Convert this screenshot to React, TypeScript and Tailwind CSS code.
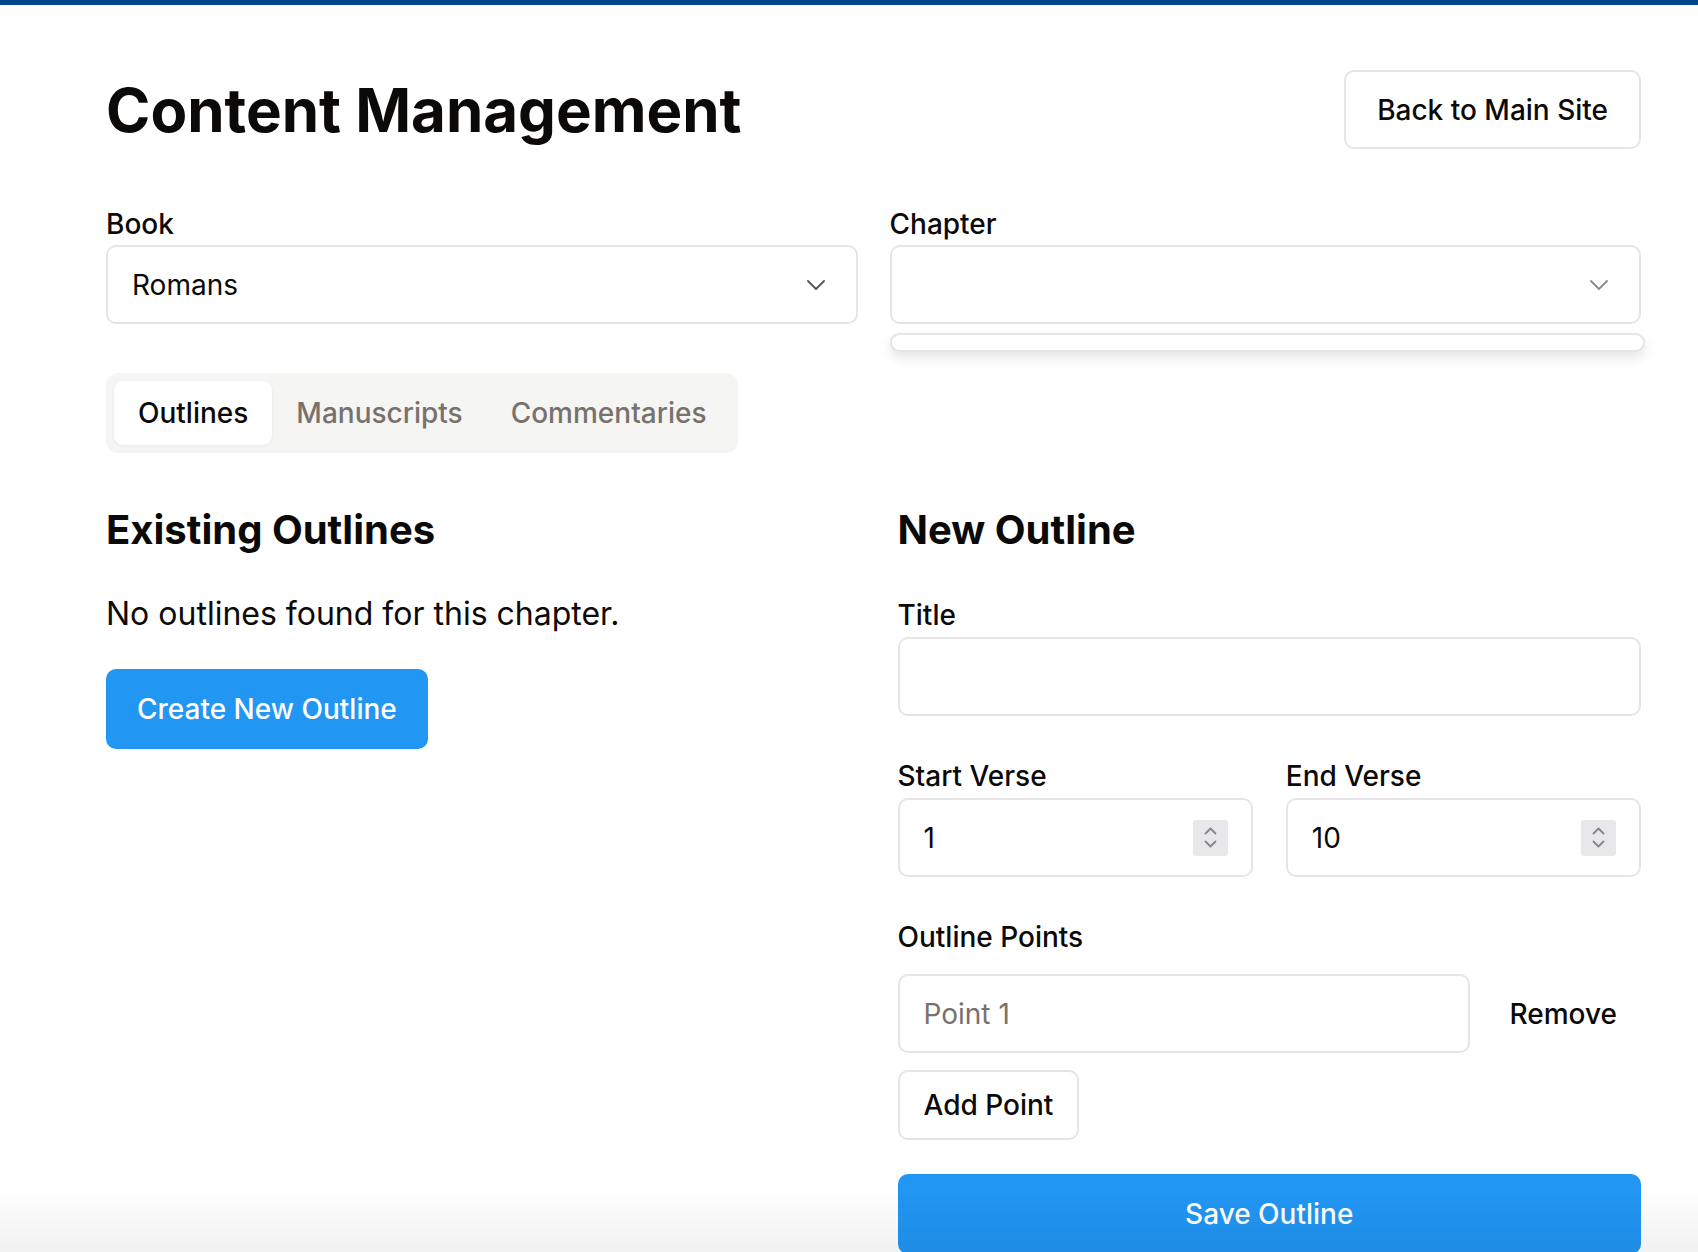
import { useState } from "react";

const tabs = ["Outlines", "Manuscripts", "Commentaries"];

function Chevron({ className }: { className?: string }) {
  return (
    <svg width="18" height="10" viewBox="0 0 18 10" fill="none" className={className} aria-hidden="true">
      <polyline points="1,1 9,9 17,1" stroke="currentColor" strokeWidth="1.8" strokeLinecap="round" strokeLinejoin="round" />
    </svg>
  );
}

function Spinner() {
  return (
    <div className="pointer-events-none absolute right-[25px] top-1/2 flex h-[36px] w-[35px] -translate-y-1/2 flex-col items-center justify-center gap-[5px] rounded-[3px] bg-[#e8e8eb] text-[#86868b]">
      <svg width="13" height="8" viewBox="0 0 13 8" fill="none" aria-hidden="true">
        <polyline points="1.5,6.5 6.5,1.5 11.5,6.5" stroke="currentColor" strokeWidth="1.8" strokeLinecap="round" strokeLinejoin="round" />
      </svg>
      <svg width="13" height="8" viewBox="0 0 13 8" fill="none" aria-hidden="true">
        <polyline points="1.5,1.5 6.5,6.5 11.5,1.5" stroke="currentColor" strokeWidth="1.8" strokeLinecap="round" strokeLinejoin="round" />
      </svg>
    </div>
  );
}

function Field({ label, children, gap = "gap-[3px]" }: { label: string; children: React.ReactNode; gap?: string }) {
  return (
    <div className={`flex flex-col ${gap}`}>
      <label className="text-[28px] font-medium leading-[36px] text-[#0c0a09]">{label}</label>
      {children}
    </div>
  );
}

const inputClass =
  "h-[79px] w-full rounded-[10px] border-2 border-[#e5e5e5] bg-white px-[24px] text-[28px] text-[#0c0a09] outline-none placeholder:text-[#78716c]";

export default function App() {
  const [tab, setTab] = useState("Outlines");
  const [points, setPoints] = useState<string[]>([""]);
  const [start, setStart] = useState("1");
  const [end, setEnd] = useState("10");

  return (
    <div className="relative min-h-screen bg-white font-[Inter,sans-serif] text-[#0c0a09]">
      <div className="h-[5px] bg-[#02468a]" />

      <div className="ml-[106px] w-[1535px] pt-[65px]">
        <header className="flex items-center justify-between">
          <h1 className="text-[60px] font-bold leading-[72px]">Content Management</h1>
          <button
            type="button"
            className="h-[79px] rounded-[10px] border-2 border-[#e5e5e5] bg-white px-[31px] text-[28px] font-medium"
          >
            Back to Main Site
          </button>
        </header>

        <div className="mt-[57px] grid grid-cols-2 gap-[32px]">
          <Field label="Book">
            <div className="relative">
              <select className="h-[79px] w-full appearance-none rounded-[10px] border-2 border-[#e5e5e5] bg-white px-[24px] text-[28px] outline-none">
                <option>Romans</option>
              </select>
              <Chevron className="pointer-events-none absolute right-[33px] top-1/2 -translate-y-1/2 text-[#57534e]" />
            </div>
          </Field>
          <Field label="Chapter">
            <div className="relative">
              <select className="h-[79px] w-full appearance-none rounded-[10px] border-2 border-[#e5e5e5] bg-white px-[24px] text-[28px] outline-none">
                <option></option>
              </select>
              <Chevron className="pointer-events-none absolute right-[33px] top-1/2 -translate-y-1/2 text-[#8a8a8a]" />
              <div className="absolute -right-[4px] left-0 top-[88px] h-[19px] rounded-[10px] border-2 border-[#e5e5e5] bg-white shadow-[0_6px_12px_rgba(0,0,0,0.1)]" />
            </div>
          </Field>
        </div>

        <div className="mt-[49px] inline-flex rounded-[12px] bg-[#f5f5f4] p-[8px]">
          {tabs.map((t) => (
            <button
              key={t}
              type="button"
              onClick={() => setTab(t)}
              className={
                t === tab
                  ? "h-[64px] rounded-[9px] bg-white px-[24px] text-[28px] font-medium text-[#0c0a09] shadow-[0_1px_3px_rgba(0,0,0,0.06)]"
                  : "h-[64px] rounded-[9px] px-[24px] text-[28px] font-medium text-[#78716c]"
              }
            >
              {t}
            </button>
          ))}
        </div>

        <div className="mt-[53px] grid grid-cols-2 gap-[48px]">
          <section>
            <h2 className="text-[40px] font-bold leading-[48px]">Existing Outlines</h2>
            <p className="mt-[37px] text-[32px] leading-[46px]">No outlines found for this chapter.</p>
            <button
              type="button"
              className="mt-[32px] h-[80px] rounded-[10px] bg-[#2196f3] px-[31px] text-[28px] font-medium text-white"
            >
              Create New Outline
            </button>
          </section>

          <section>
            <h2 className="text-[40px] font-bold leading-[48px]">New Outline</h2>

            <div className="mt-[43px] flex flex-col gap-[42px]">
              <Field label="Title" gap="gap-[4px]">
                <input className={inputClass} />
              </Field>

              <div className="grid grid-cols-2 gap-[33px]">
                <Field label="Start Verse" gap="gap-[4px]">
                  <div className="relative">
                    <input
                      type="number"
                      value={start}
                      onChange={(e) => setStart(e.target.value)}
                      className={`${inputClass} [appearance:textfield] [&::-webkit-inner-spin-button]:appearance-none`}
                    />
                    <Spinner />
                  </div>
                </Field>
                <Field label="End Verse" gap="gap-[4px]">
                  <div className="relative">
                    <input
                      type="number"
                      value={end}
                      onChange={(e) => setEnd(e.target.value)}
                      className={`${inputClass} [appearance:textfield] [&::-webkit-inner-spin-button]:appearance-none`}
                    />
                    <Spinner />
                  </div>
                </Field>
              </div>

              <div>
                <label className="block text-[28px] font-medium leading-[36px]">Outline Points</label>
                <div className="mt-[19px] flex flex-col gap-[17px]">
                  {points.map((p, i) => (
                    <div key={i} className="flex items-center gap-[16px]">
                      <input
                        value={p}
                        placeholder={`Point ${i + 1}`}
                        onChange={(e) => setPoints(points.map((x, j) => (j === i ? e.target.value : x)))}
                        className={`${inputClass} flex-1`}
                      />
                      <button
                        type="button"
                        onClick={() => setPoints(points.filter((_, j) => j !== i))}
                        className="h-[79px] px-[24px] text-[28px] font-medium"
                      >
                        Remove
                      </button>
                    </div>
                  ))}
                  <div>
                    <button
                      type="button"
                      onClick={() => setPoints([...points, ""])}
                      className="h-[70px] rounded-[10px] border-2 border-[#e5e5e5] bg-white px-[24px] text-[28px] font-medium"
                    >
                      Add Point
                    </button>
                  </div>
                </div>
                <button
                  type="button"
                  className="mt-[34px] h-[80px] w-full rounded-[10px] bg-[#2196f3] text-[28px] font-medium text-white"
                >
                  Save Outline
                </button>
              </div>
            </div>
          </section>
        </div>
      </div>

      <div className="pointer-events-none fixed inset-x-0 bottom-0 h-[64px] bg-linear-to-b from-black/0 to-black/[0.055]" />
    </div>
  );
}
